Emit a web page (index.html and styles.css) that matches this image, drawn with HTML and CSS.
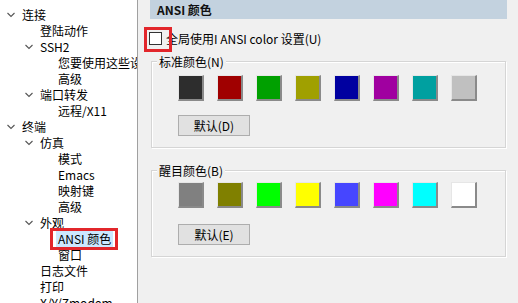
FILE: index.html
```html
<!DOCTYPE html>
<html lang="zh-CN">
<head>
<meta charset="utf-8">
<title>ANSI 颜色</title>
<link rel="stylesheet" href="styles.css">
</head>
<body>
<div class="app">
  <div class="tree">
    <div class="row l0"><span class="tw"><svg width="8" height="6" viewBox="0 0 8 6"><path d="M0.5 1 L4 4.5 L7.5 1" fill="none" stroke="#555" stroke-width="1.1"/></svg></span><span class="tx">连接</span></div>
    <div class="row l1"><span class="tw"></span><span class="tx">登陆动作</span></div>
    <div class="row l1"><span class="tw"><svg width="8" height="6" viewBox="0 0 8 6"><path d="M0.5 1 L4 4.5 L7.5 1" fill="none" stroke="#555" stroke-width="1.1"/></svg></span><span class="tx">SSH2</span></div>
    <div class="row l2"><span class="tw"></span><span class="tx">您要使用这些设</span></div>
    <div class="row l2"><span class="tw"></span><span class="tx">高级</span></div>
    <div class="row l1"><span class="tw"><svg width="8" height="6" viewBox="0 0 8 6"><path d="M0.5 1 L4 4.5 L7.5 1" fill="none" stroke="#555" stroke-width="1.1"/></svg></span><span class="tx">端口转发</span></div>
    <div class="row l2"><span class="tw"></span><span class="tx">远程/X11</span></div>
    <div class="row l0"><span class="tw"><svg width="8" height="6" viewBox="0 0 8 6"><path d="M0.5 1 L4 4.5 L7.5 1" fill="none" stroke="#555" stroke-width="1.1"/></svg></span><span class="tx">终端</span></div>
    <div class="row l1"><span class="tw"><svg width="8" height="6" viewBox="0 0 8 6"><path d="M0.5 1 L4 4.5 L7.5 1" fill="none" stroke="#555" stroke-width="1.1"/></svg></span><span class="tx">仿真</span></div>
    <div class="row l2"><span class="tw"></span><span class="tx">模式</span></div>
    <div class="row l2"><span class="tw"></span><span class="tx">Emacs</span></div>
    <div class="row l2"><span class="tw"></span><span class="tx">映射键</span></div>
    <div class="row l2"><span class="tw"></span><span class="tx">高级</span></div>
    <div class="row l1"><span class="tw"><svg width="8" height="6" viewBox="0 0 8 6"><path d="M0.5 1 L4 4.5 L7.5 1" fill="none" stroke="#555" stroke-width="1.1"/></svg></span><span class="tx">外观</span></div>
    <div class="row l2"><span class="tw"></span><span class="tx sel">ANSI 颜色</span></div>
    <div class="row l2"><span class="tw"></span><span class="tx">窗口</span></div>
    <div class="row l1"><span class="tw"></span><span class="tx">日志文件</span></div>
    <div class="row l1"><span class="tw"></span><span class="tx">打印</span></div>
    <div class="row l1"><span class="tw"></span><span class="tx">X/Y/Zmodem</span></div>
  </div>
  <div class="main">
    <div class="hdr">ANSI 颜色</div>
    <label class="opt"><span class="chk"></span><span>全局使用I ANSI color 设置(U)</span></label>
    <div class="group">
      <div class="gtitle">标准颜色(N)</div>
      <div class="swatches">
        <span class="sw" style="background:#2d2d2d"></span>
        <span class="sw" style="background:#a00000"></span>
        <span class="sw" style="background:#00a000"></span>
        <span class="sw" style="background:#a0a000"></span>
        <span class="sw" style="background:#0000a0"></span>
        <span class="sw" style="background:#a000a0"></span>
        <span class="sw" style="background:#00a0a0"></span>
        <span class="sw" style="background:#c0c0c0"></span>
      </div>
      <button class="btn">默认(D)</button>
    </div>
    <div class="group g2">
      <div class="gtitle">醒目颜色(B)</div>
      <div class="swatches">
        <span class="sw" style="background:#808080"></span>
        <span class="sw" style="background:#808000"></span>
        <span class="sw" style="background:#00ff00"></span>
        <span class="sw" style="background:#ffff00"></span>
        <span class="sw" style="background:#4646ff"></span>
        <span class="sw" style="background:#ff00ff"></span>
        <span class="sw" style="background:#00ffff"></span>
        <span class="sw" style="background:#ffffff"></span>
      </div>
      <button class="btn">默认(E)</button>
    </div>
  </div>
</div>
</body>
</html>
```
FILE: styles.css
```css
html, body {
  margin: 0;
  background: #f0f0f0;
}
body {
  width: 518px;
  height: 303px;
  overflow: hidden;
  font: 12px/16px "Noto Sans CJK SC", "Microsoft YaHei", sans-serif;
  color: #000;
}
.app {
  display: flex;
  height: 303px;
}
.tree {
  width: 137px;
  flex: none;
  background: #fff;
  border-right: 1px solid #a0a0a0;
  padding-top: 7px;
  overflow: hidden;
}
.row {
  display: flex;
  align-items: center;
  height: 16px;
  white-space: nowrap;
}
.l0 { padding-left: 4px; }
.l1 { padding-left: 22px; }
.l2 { padding-left: 40px; }
.tw {
  width: 14px;
  flex: none;
  display: flex;
  justify-content: center;
  align-items: center;
}
.tx {
  margin-left: 2px;
  padding: 0 2px;
}
.sel {
  position: relative;
  background: #cce8ff;
}
.sel::after {
  content: "";
  position: absolute;
  left: -6px;
  right: -5px;
  top: -3px;
  bottom: -3px;
  border: 3px solid #e2262b;
}
.main {
  flex: 1;
  min-width: 0;
  padding: 0 11px 0 12px;
}
.hdr {
  height: 19px;
  line-height: 19px;
  background: #c3d2df;
  font-weight: bold;
  padding-left: 7px;
  color: #111;
}
.opt {
  display: flex;
  align-items: center;
  height: 13px;
  margin: 13px 0 0 -1px;
  white-space: nowrap;
}
.chk {
  position: relative;
  width: 11px;
  height: 11px;
  flex: none;
  border: 1px solid #333;
  background: #fff;
  margin-right: 4px;
}
.chk::after {
  content: "";
  position: absolute;
  left: -6px;
  top: -6px;
  right: -11px;
  bottom: -8px;
  border: 3px solid #e2262b;
}
.group {
  margin: 16px 1px 0;
  border: 1px solid #d5d5d5;
  box-shadow: inset 1px 1px 0 #fff, 1px 1px 0 #fff;
  padding: 0 0 11px 26px;
}
.group + .group {
  margin-top: 22px;
}
.gtitle {
  width: max-content;
  margin: -8px 0 0 -21px;
  padding: 0 2px;
  background: #f0f0f0;
  line-height: 16px;
}
.swatches {
  display: flex;
  gap: 13px;
  margin-top: 5px;
}
.g2 .swatches {
  margin-top: 3px;
}
.sw {
  width: 23px;
  height: 23px;
  border-style: solid;
  border-width: 1px 2px 2px 1px;
  border-color: #e6e6e6 #8a8a8a #8a8a8a #e6e6e6;
}
.btn {
  display: block;
  margin-top: 14px;
  width: 72px;
  height: 21px;
  padding: 0;
  background: #e1e1e1;
  border: 1px solid #adadad;
  font: inherit;
  color: #000;
}
.g2 .btn {
  margin-top: 16px;
}
```
